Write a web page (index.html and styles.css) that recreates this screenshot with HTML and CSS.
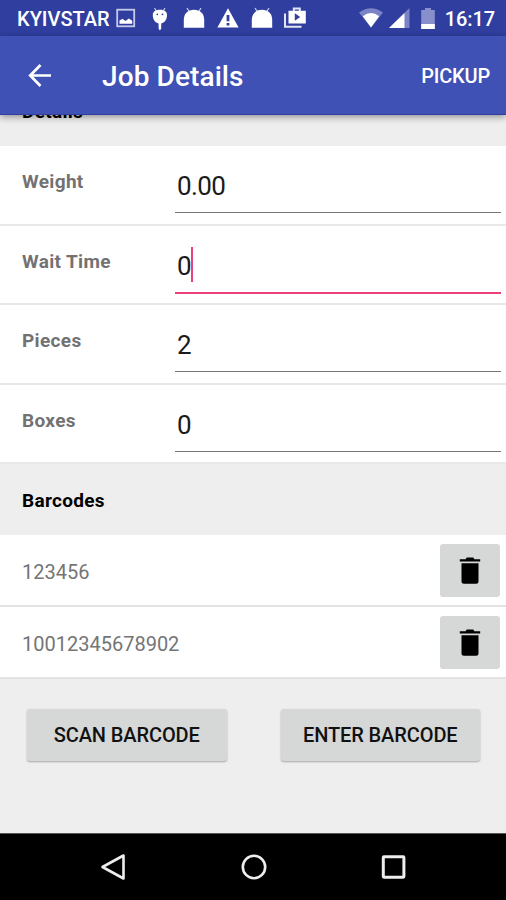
FILE: index.html
```html
<!DOCTYPE html>
<html lang="en">
<head>
    <meta charset="UTF-8">
    <meta name="viewport" content="width=device-width, initial-scale=1.0">
    <title>Job Details</title>
    <link rel="stylesheet" href="styles.css">
</head>
<body>
    <div class="screen">
        <div class="status-bar">
            <span class="carrier">KYIVSTAR</span>
            <div class="notifications">
                <svg width="20" height="20" viewBox="0 0 20 20">
                    <rect x="1.2" y="1.7" width="17" height="16.6" fill="none" stroke="#c5cae9" stroke-width="1.8"/>
                    <path d="M3.5 15.8v-3.3l3-1.8 3 2.3 3.3-2.6 3.4 2.4v3z" fill="#fff"/>
                </svg>
                <svg width="18" height="24" viewBox="0 0 18 24">
                    <path d="M3.5 1l2.2 3.5M14 1l-2.2 3.5" stroke="#c5cae9" stroke-width="1.2"/>
                    <path d="M1.8 8C1.8 5 4 2.8 8.9 2.8S16 5 16 8c0 5-2.5 7.5-5.8 8.500V21.500L8.900 23.500 7.600 21.500V16.500C4.300 15.500 1.800 13 1.800 8z" fill="#fff"/>
                    <circle cx="6.300" cy="7.300" r=".9" fill="#303f9f"/>
                    <circle cx="11.500" cy="7.300" r=".9" fill="#303f9f"/>
                </svg>
                <svg class="droid" width="22" height="22" viewBox="0 0 22 22">
                    <path d="M4 1l2.500 4M18 1l-2.500 4" stroke="#c5cae9" stroke-width="1.300"/>
                    <path d="M.8 20.800V13C.8 6.500 5 2.800 11 2.800S21.200 6.500 21.200 13v7.800z" fill="#fff"/>
                </svg>
                <svg width="22" height="22" viewBox="0 0 22 22">
                    <path d="M11 1.200L21.600 20.400H.4z" fill="#fff"/>
                    <path d="M11 8v6.200M11 16v2.500" stroke="#303f9f" stroke-width="2.800"/>
                </svg>
                <svg class="droid" width="22" height="22" viewBox="0 0 22 22">
                    <path d="M4 1l2.500 4M18 1l-2.500 4" stroke="#c5cae9" stroke-width="1.300"/>
                    <path d="M.8 20.800V13C.8 6.500 5 2.800 11 2.800S21.200 6.500 21.200 13v7.800z" fill="#fff"/>
                </svg>
                <svg width="22" height="22" viewBox="0 0 22 22">
                    <path d="M1 6.500v13.300h16.500" fill="none" stroke="#e3e5f4" stroke-width="2"/>
                    <path d="M9.800 4V1.600h6V4" fill="none" stroke="#e3e5f4" stroke-width="2"/>
                    <path fill-rule="evenodd" d="M4.500 3.800h17.300v12.800H4.500zM10.800 6.300v7.400l5.400-3.700z" fill="#fff"/>
                </svg>
            </div>
            <div class="system">
                <svg class="wifi" width="24" height="20" viewBox="0 0 24 20">
                    <path d="M0 4.500Q12-4 24 4.500L12 19.500z" fill="#7983c5"/>
                    <path d="M3.800 8.200Q12 1.800 20.200 8.200L12 19.500z" fill="#fff"/>
                </svg>
                <svg class="signal" width="21" height="20" viewBox="0 0 21 20">
                    <path d="M20.500 0v20H0z" fill="#7983c5"/>
                    <path d="M15.500 4.900V20H0z" fill="#fff"/>
                </svg>
                <svg class="battery" width="14" height="21" viewBox="0 0 14 21">
                    <path d="M4 0h6v2h3.800v19H.2V2H4z" fill="#8790cc"/>
                    <path d="M.2 16h13.600v5H.2z" fill="#fff"/>
                </svg>
                <span class="clock">16:17</span>
            </div>
        </div>

        <div class="app-bar">
            <svg class="back" width="24" height="24" viewBox="0 0 24 24">
                <path d="M23 12.500H3M12.500 2L2.200 12.500l10.300 10.500" fill="none" stroke="#fff" stroke-width="2.700"/>
            </svg>
            <h1>Job Details</h1>
            <span class="action">PICKUP</span>
        </div>

        <div class="content">
            <h2 class="section section-details">Details</h2>
            <div class="field">
                <label>Weight</label>
                <div class="input"><span>0.00</span></div>
            </div>
            <div class="field">
                <label>Wait Time</label>
                <div class="input focused"><span>0</span></div>
            </div>
            <div class="field">
                <label>Pieces</label>
                <div class="input"><span>2</span></div>
            </div>
            <div class="field">
                <label>Boxes</label>
                <div class="input"><span>0</span></div>
            </div>

            <h2 class="section">Barcodes</h2>
            <div class="barcode">
                <span>123456</span>
                <div class="delete">
                    <svg width="22" height="27" viewBox="0 0 22 27">
                        <path d="M.8 2.200h5.700L7.800.4h6.400l1.300 1.800h5.700v2.200H.8zM2.500 6.200h17v18q0 2.500-2.500 2.500H5q-2.500 0-2.500-2.500z"/>
                    </svg>
                </div>
            </div>
            <div class="barcode">
                <span>10012345678902</span>
                <div class="delete">
                    <svg width="22" height="27" viewBox="0 0 22 27">
                        <path d="M.8 2.200h5.700L7.800.4h6.400l1.300 1.800h5.700v2.200H.8zM2.500 6.200h17v18q0 2.500-2.500 2.500H5q-2.500 0-2.500-2.500z"/>
                    </svg>
                </div>
            </div>

            <div class="buttons">
                <div class="button scan">SCAN BARCODE</div>
                <div class="button enter">ENTER BARCODE</div>
            </div>
        </div>

        <div class="nav-bar">
            <svg width="28" height="30" viewBox="0 0 28 30">
                <path d="M24.500 3.500v23L3.500 15z" fill="none" stroke="#eee" stroke-width="2.600" stroke-linejoin="round"/>
            </svg>
            <svg width="28" height="30" viewBox="0 0 28 30">
                <circle cx="14" cy="15" r="11.200" fill="none" stroke="#eee" stroke-width="2.600"/>
            </svg>
            <svg width="28" height="30" viewBox="0 0 28 30">
                <rect x="3.300" y="4.800" width="20.600" height="20.400" rx=".6" fill="none" stroke="#eee" stroke-width="3"/>
            </svg>
        </div>
    </div>
</body>
</html>
```
FILE: styles.css
```css
* {
    box-sizing: border-box;
}
body {
    font-family: Roboto, 'Liberation Sans', sans-serif;
    margin: 0;
    background: #eee;
    color: #000;
}
svg {
    display: block;
    flex: none;
}
.screen {
    width: 506px;
    height: 900px;
    display: flex;
    flex-direction: column;
    overflow: hidden;
}
.status-bar {
    flex: none;
    height: 36px;
    padding: 0 11px 0 17px;
    display: flex;
    align-items: center;
    background: #303f9f;
    color: #fff;
    font-weight: 500;
}
.carrier {
    width: 99px;
    font-size: 20px;
    line-height: 36px;
    padding-top: 2px;
}
.notifications {
    display: flex;
    align-items: center;
}
.notifications svg:nth-child(2) {
    margin: 2px 14px 0 15px;
}
.notifications svg:nth-child(4) {
    margin: 0 12px;
}
.notifications svg:nth-child(6) {
    margin: -1px 0 0 11px;
}
.system {
    margin-left: auto;
    display: flex;
    align-items: center;
}
.signal {
    margin: 0 11px 0 6px;
}
.battery {
    margin-right: 10px;
}
.clock {
    font-size: 20px;
    padding-top: 2px;
    letter-spacing: -0.1px;
}
.app-bar {
    flex: none;
    height: 79px;
    padding: 0 16px 0 28px;
    display: flex;
    align-items: center;
    background: #3f51b5;
    border-bottom: 1px solid #303f9f;
    box-shadow: 0 2px 7px rgba(0, 0, 0, 0.4);
    color: #fff;
    z-index: 1;
}
.app-bar h1 {
    margin: 2px 0 0 50px;
    font-size: 28px;
    font-weight: 500;
    letter-spacing: 0.1px;
}
.action {
    margin: 2px 0 0 auto;
    font-size: 20px;
    font-weight: 500;
    letter-spacing: -0.2px;
}
.content {
    flex: 1;
    min-height: 0;
}
.section {
    margin: 0;
    height: 70.6px;
    padding-left: 22px;
    font-size: 19px;
    font-weight: 700;
    line-height: 73px;
    letter-spacing: 0.3px;
}
/* scrolled partly under the app bar */
.section-details {
    margin-top: -39.6px;
}
.field {
    height: 79.6px;
    padding: 0 5px 0 22px;
    display: flex;
    background: #fff;
    border-bottom: 2px solid #e8e8e8;
}
.field label {
    width: 153px;
    font-size: 19px;
    font-weight: 700;
    line-height: 72px;
    letter-spacing: 0.35px;
    color: #727272;
}
.input {
    flex: 1;
    height: 67px;
    padding: 21px 2px 0;
    border-bottom: 1.5px solid #777;
    font-size: 26px;
    line-height: 38px;
    letter-spacing: -0.6px;
    color: #1a1a1a;
}
.input span {
    display: inline-block;
    height: 35px;
}
.input.focused {
    height: 68px;
    border-bottom: 2px solid #ec407a;
}
.input.focused span {
    border-right: 2px solid #ec407a;
}
.barcode {
    height: 71.8px;
    padding: 0 6px 0 22px;
    display: flex;
    align-items: center;
    justify-content: space-between;
    background: #fff;
    border-bottom: 2px solid #e3e3e3;
    font-size: 20px;
    color: #757575;
}
.barcode > span {
    padding-top: 4px;
}
.delete {
    width: 60px;
    height: 53px;
    margin-top: 1px;
    padding-top: 1px;
    display: flex;
    align-items: center;
    justify-content: center;
    background: #d6d7d7;
    border-radius: 3px;
}
.buttons {
    padding: 30.5px 26px 0 27px;
    display: flex;
    justify-content: space-between;
}
.button {
    width: 199.5px;
    height: 52px;
    background: #d6d7d7;
    border-radius: 3px;
    box-shadow: 0 1px 2px rgba(0, 0, 0, 0.3);
    font-size: 20px;
    font-weight: 500;
    line-height: 53px;
    text-align: center;
    letter-spacing: -0.1px;
    color: #111;
}
.nav-bar {
    flex: none;
    height: 67px;
    padding: 0 98px 0 99px;
    display: flex;
    align-items: center;
    justify-content: space-between;
    background: #000;
    border-top: 1px solid #555;
}
```
